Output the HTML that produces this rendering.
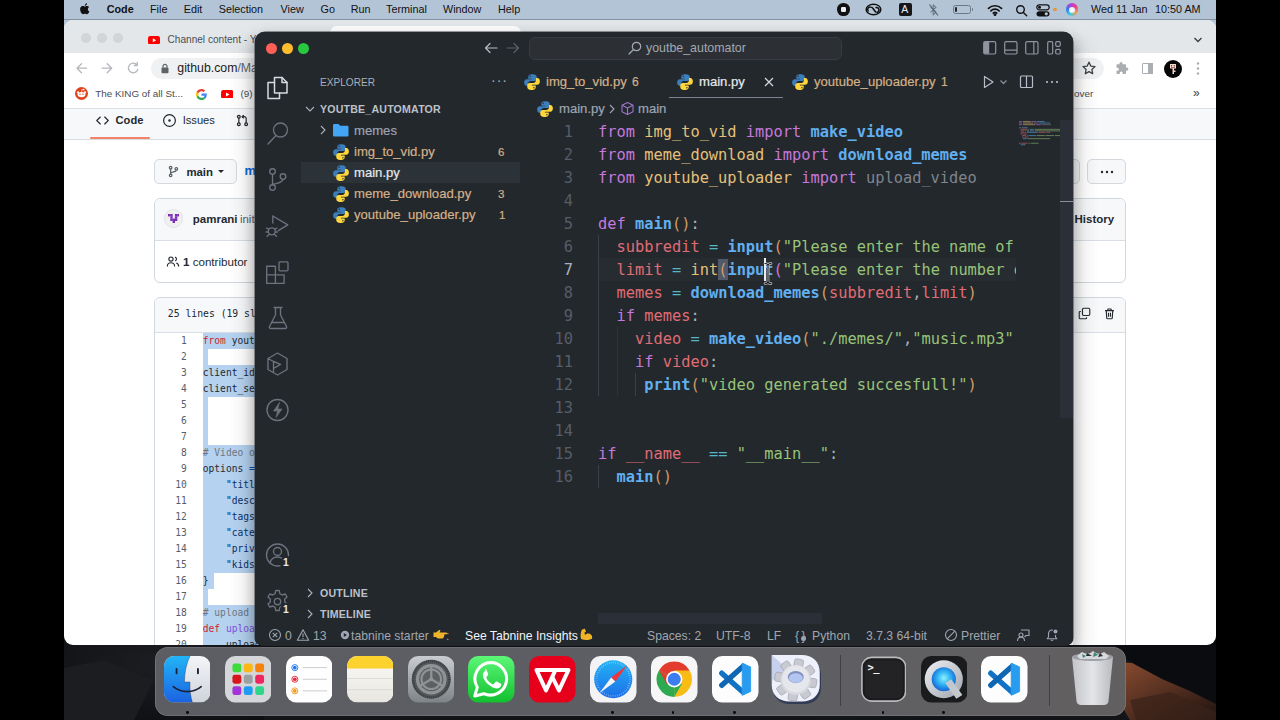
<!DOCTYPE html>
<html><head><meta charset="utf-8"><title>screen</title>
<style>
*{box-sizing:border-box;margin:0;padding:0}
html,body{width:1280px;height:720px;overflow:hidden;background:#000;font-family:"Liberation Sans",sans-serif;}
.abs,.abs *{position:absolute}
#screen{position:absolute;left:0;top:0;width:1280px;height:720px;overflow:hidden;background:#15161a}
.bar{top:0;width:64px;height:720px;background:#000}
#screen div,#screen span,#screen svg{position:absolute;white-space:nowrap}
/* menu bar */
#menubar{left:64px;top:0;width:1152px;height:30px;background:#b4c4d7}
#menubar span{top:1.600px;font-size:10.8px;color:#111;line-height:14px}
/* chrome */
#chrome{left:64px;top:20px;width:1152px;height:625px;background:#fff;border-radius:9px 9px 9px 9px;overflow:hidden}
/* vscode */
#vsc{left:255px;top:32px;width:818px;height:613px;background:#23282c;border-radius:10px 10px 7px 7px;overflow:hidden;box-shadow:0 0 0 0.5px #3a3d42,0 5px 16px rgba(0,0,0,.28)}
/* dock */
#dock{left:155px;top:647px;width:970px;height:68px;background:#5b5e66;border-radius:14px}
</style></head><body>
<div id="screen">
<!--DESKTOP-->
<svg style="left:64px;top:640px" width="1152" height="80" viewBox="64 640 1152 80">
<defs><linearGradient id="rg" x1="0" y1="0" x2="1" y2="1"><stop offset="0" stop-color="#8a4c30"/><stop offset=".45" stop-color="#5a3222"/><stop offset="1" stop-color="#1e1411"/></linearGradient>
<radialGradient id="lg" cx=".5" cy=".3" r=".8"><stop offset="0" stop-color="#1c1e22"/><stop offset="1" stop-color="#0e0f12"/></radialGradient></defs>
<rect x="64" y="640" width="1152" height="80" fill="#131418"/>
<rect x="64" y="640" width="200" height="80" fill="url(#lg)"/>
<path d="M64 668l40-8l50 20l-20 40h-70z" fill="#1b1d21"/>
<path d="M1110 640h106v66l-45-22l-46-26z" fill="#0b0c0f"/>
<path d="M1118 662l14 1l30 16l28 12l26 13v16h-86l-12-20z" fill="url(#rg)"/>
<path d="M1130 700l40-8l46 20v8h-80z" fill="#3a221a" opacity=".7"/>
</svg>
<!--DESKTOP-END-->
<!--MENUBAR-->
<div id="menubar">
<svg style="left:15.300px;top:2px" width="11.500" height="14" viewBox="0 15 170 175"><path d="M150.370 130.250c-2.450 5.660-5.350 10.870-8.710 15.660-4.580 6.530-8.330 11.050-11.220 13.560-4.480 4.120-9.280 6.230-14.420 6.350-3.690 0-8.140-1.050-13.320-3.180-5.197-2.120-9.973-3.170-14.340-3.170-4.580 0-9.492 1.050-14.746 3.170-5.262 2.130-9.501 3.240-12.742 3.350-4.929.21-9.842-1.960-14.746-6.520-3.130-2.730-7.045-7.410-11.735-14.040-5.032-7.080-9.169-15.290-12.410-24.650-3.471-10.110-5.211-19.900-5.211-29.378 0-10.857 2.346-20.221 7.045-28.068 3.693-6.303 8.606-11.275 14.755-14.925s12.793-5.510 19.948-5.629c3.915 0 9.049 1.211 15.429 3.591 6.362 2.388 10.447 3.599 12.238 3.599 1.339 0 5.877-1.416 13.570-4.239 7.275-2.618 13.415-3.702 18.445-3.275 13.630 1.100 23.870 6.473 30.680 16.153-12.190 7.386-18.220 17.731-18.100 31.002.11 10.337 3.860 18.939 11.230 25.769 3.340 3.170 7.070 5.620 11.220 7.360-.9 2.610-1.850 5.110-2.860 7.510zM119.110 7.240c0 8.102-2.960 15.667-8.860 22.669-7.120 8.324-15.732 13.134-25.071 12.375a25.222 25.222 0 0 1-.188-3.070c0-7.778 3.386-16.102 9.399-22.908 3.002-3.446 6.820-6.311 11.450-8.597 4.620-2.252 8.990-3.497 13.100-3.710.12 1.083.17 2.166.17 3.240z" fill="#111" transform="translate(0,15)"/></svg>
<span style="left:42.7px;font-weight:bold;">Code</span><span style="left:86px;">File</span><span style="left:119.69999999999999px;">Edit</span><span style="left:154.7px;">Selection</span><span style="left:216.5px;">View</span><span style="left:256.5px;">Go</span><span style="left:286.7px;">Run</span><span style="left:322px;">Terminal</span><span style="left:379px;">Window</span><span style="left:434px;">Help</span>
<div style="left:773.2px;top:3.200px;width:12.500px;height:12.500px;border-radius:6.300px;background:#111"></div><div style="left:776.7px;top:6.700px;width:5.500px;height:5.500px;border-radius:1.300px;background:#e8eef5"></div>
<svg style="left:801px;top:3px" width="17" height="13" viewBox="0 0 17 13" fill="none" stroke="#111" stroke-width="1.500"><ellipse cx="8.500" cy="6.500" rx="7.300" ry="5.300"/><path d="M3.500 8.500a2.600 2.600 0 0 1 2-4.500c1 0 2 .5 2.500 1.500l3 4M11.500 9.500a2.500 2.500 0 1 0-1-4.800"/></svg>
<div style="left:834.5px;top:3px;width:13px;height:13px;border-radius:2px;background:#15171a"></div><span style="left:837.3px;top:3px;font-size:10.500px;color:#e8eef5;line-height:13px">A</span>
<svg style="left:863px;top:3px" width="13" height="14" viewBox="0 0 13 14" fill="none" stroke="#6d7887" stroke-width="1.100" stroke-linejoin="round"><path d="M3.500 4.200l5.500 5l-2.800 2.600v-10l2.800 2.600l-5.500 5"/><path d="M2.500 1.500l8.500 11" stroke="#54606e"/></svg>
<div style="left:888.8px;top:5.300px;width:18.500px;height:8.800px;border:1px solid #6d7887;border-radius:2.500px"></div><div style="left:890.5px;top:7px;width:2.500px;height:5.400px;background:#222;border-radius:1px"></div><div style="left:908px;top:8px;width:1.300px;height:3.300px;background:#6d7887;border-radius:0 1px 1px 0"></div>
<svg style="left:922.5px;top:3.500px" width="16" height="12" viewBox="0 0 16 12" fill="none" stroke="#111" stroke-width="1.700" stroke-linecap="round"><path d="M1.500 4.300a9.500 9.500 0 0 1 13 0M3.900 6.800a6 6 0 0 1 8.200 0"/><path d="M6.300 9.200a2.500 2.500 0 0 1 3.400 0" /><circle cx="8" cy="10.600" r=".6" fill="#111"/></svg>
<svg style="left:950.5px;top:3.500px" width="13" height="13" viewBox="0 0 13 13" fill="none" stroke="#111" stroke-width="1.400" stroke-linecap="round"><circle cx="5.500" cy="5.500" r="3.800"/><path d="M8.400 8.400l3.300 3.300"/></svg>
<svg style="left:972px;top:3.500px" width="14" height="13" viewBox="0 0 14 13"><rect x=".8" y=".8" width="12.400" height="5" rx="2.500" fill="none" stroke="#111" stroke-width="1.200"/><circle cx="3.500" cy="3.300" r="1.500" fill="#111"/><rect x=".5" y="7.200" width="13" height="5.300" rx="2.650" fill="#111"/><circle cx="10.300" cy="9.850" r="1.600" fill="#b4c3d4"/></svg>
<div style="left:989.3px;top:8px;width:3.400px;height:3.400px;border-radius:2px;background:#e8943a"></div>
<div style="left:1001.5px;top:3.300px;width:12.400px;height:12.400px;border-radius:6.200px;background:conic-gradient(from 200deg,#3fd0e0,#3a7bf0,#b040e0,#f04080,#f0a050,#3fd0e0)"></div><div style="left:1004.7px;top:6.500px;width:6px;height:6px;border-radius:3px;background:radial-gradient(#fff,#d8e8ff)"></div>
<div style="left:0;top:19.200px;width:1152px;height:.9px;background:rgba(70,85,105,.45)"></div><!--MBLINE--><span style="left:1027px">Wed 11 Jan</span><span style="left:1091px">10:50 AM</span>
</div><!--MENU-END-->
<!--CHROME-->
<div id="chrome"><div id="chi" style="left:-64px;top:-20px;width:1280px;height:720px">
<!--CHROME-IN-->

<style>
#chi .g{font-size:11.2px;line-height:14px;color:#24292f}
#chi .gm{font-family:"DejaVu Sans Mono","Liberation Mono",monospace;font-size:9.6px;line-height:16px;height:16px;color:#24292f;white-space:pre!important}
#chi .gm i{position:static!important;font-style:normal}
#chi .gn{font-family:"DejaVu Sans Mono","Liberation Mono",monospace;font-size:9.6px;line-height:16px;height:16px;color:#57606a;width:30px;left:156.700px;text-align:right}
.box{border:1px solid #d0d7de;border-radius:6px;background:#fff;overflow:hidden}
</style>
<div style="left:64px;top:20px;width:1152px;height:33px;background:#e3e7ea"></div>
<div style="left:80.6px;top:32.600px;width:10px;height:10px;border-radius:5px;background:#d2d4d7"></div><div style="left:96.7px;top:32.600px;width:10px;height:10px;border-radius:5px;background:#d2d4d7"></div><div style="left:112.8px;top:32.600px;width:10px;height:10px;border-radius:5px;background:#d2d4d7"></div><div style="left:330px;top:26px;width:191px;height:27px;background:#fff;border-radius:7px 7px 0 0"></div><svg style="left:148.3px;top:35.8px" width="12" height="8.5" viewBox="0 0 12 8.500"><rect width="12" height="8.500" rx="2.200" fill="#f00"/><path d="M4.800 2.300v3.900l3.400-1.950z" fill="#fff"/></svg><span style="left:167.500px;top:33px;font-size:10.1px;line-height:14px;color:#4a4e53">Channel content - YouTube Studio</span>
<svg style="left:1191px;top:34px" width="14" height="12" viewBox="0 0 14 12" fill="none" stroke="#3c4043" stroke-width="1.400"><path d="M3.500 4l3.500 3.500l3.500-3.500"/></svg>
<div style="left:64px;top:53px;width:1152px;height:55px;background:#fff"></div>
<svg style="left:74px;top:60px" width="70" height="16" viewBox="74 60 70 16" fill="none" stroke="#b4b7bb" stroke-width="1.300" stroke-linecap="round" stroke-linejoin="round"><path d="M86.500 68.200h-9.500M81.500 63.700l-4.500 4.500l4.500 4.500"/><path d="M102.200 68.200h9.500M107.200 63.700l4.500 4.500l-4.500 4.500"/><path d="M137 65a4.800 4.800 0 1 0 .8 4.500M137.300 62.500v3h-3"/></svg>
<div style="left:151px;top:57.500px;width:953px;height:21.500px;border-radius:11px;background:#eff1f3"></div>
<svg style="left:160px;top:63px" width="10" height="11" viewBox="0 0 10 11"><rect x="1.500" y="4.500" width="7" height="5.800" rx="1" fill="#5f6368"/><path d="M3 4.800v-1.500a2 2 0 0 1 4 0v1.500" fill="none" stroke="#5f6368" stroke-width="1.200"/></svg>
<span style="left:177.300px;top:60.500px;font-size:12.3px;line-height:15px;color:#1f2023">github.com<span style="position:static!important;color:#5f6368">/MaanavD/meme</span></span>
<svg style="left:1081px;top:60px" width="16" height="16" viewBox="0 0 16 16" fill="none" stroke="#3c4043" stroke-width="1.300" stroke-linejoin="round"><path d="M8 2.200l1.800 3.900l4.200.5l-3.100 2.900l.8 4.200l-3.700-2.100l-3.700 2.100l.8-4.200l-3.100-2.900l4.200-.5z"/></svg>
<svg style="left:1114px;top:61px" width="15" height="15" viewBox="0 0 15 15"><path d="M5.500 2.500a1.500 1.500 0 0 1 3 0v.8h2.700a.8.800 0 0 1 .8.800v2.400h.8a1.600 1.600 0 0 1 0 3.200h-.8v2.500a.8.800 0 0 1-.8.800h-2.500v-.9a1.500 1.500 0 0 0-3 0v.9h-2.400a.8.800 0 0 1-.8-.8v-2.500h.8a1.500 1.500 0 0 0 0-3h-.8v-2.600a.8.800 0 0 1 .8-.8h2.200z" fill="#aaadb1"/></svg>
<div style="left:1141.500px;top:63px;width:11.500px;height:10.500px;border:1.500px solid #aaadb1;border-radius:1px"></div><div style="left:1148px;top:63px;width:5px;height:10.500px;background:#aaadb1"></div>
<div style="left:1164px;top:59.500px;width:18px;height:18px;border-radius:9px;background:#060606"></div>
<svg style="left:1168px;top:63px" width="10" height="12" viewBox="0 0 10 12"><path d="M2 1h6v4.500h-2v2h1.500v1.500h-1.500v2h-1.500v-5.500h-2.500z" fill="#f4d9c6"/><rect x="3" y="2.300" width="1" height="1" fill="#000"/><rect x="5.800" y="2.300" width="1" height="1" fill="#000"/><rect x="3" y="4" width="3.800" height=".7" fill="#b33"/></svg>
<svg style="left:1195px;top:61px" width="6" height="15" viewBox="0 0 6 15" fill="#aaadb1"><circle cx="3" cy="2.500" r="1.200"/><circle cx="3" cy="7.500" r="1.200"/><circle cx="3" cy="12.500" r="1.200"/></svg>
<div style="left:75.200px;top:87px;width:13px;height:13px;border-radius:6.500px;background:#e0421b"></div><svg style="left:75.200px;top:87px" width="13" height="13" viewBox="0 0 13 13"><ellipse cx="6.500" cy="7.600" rx="3.900" ry="2.700" fill="#fff"/><circle cx="10" cy="5.400" r="1.100" fill="#fff"/><circle cx="3" cy="5.400" r="1.100" fill="#fff"/><circle cx="8.800" cy="2.600" r=".8" fill="#fff"/><path d="M6.500 5l.6-2.600l1.700.4" stroke="#fff" stroke-width=".6" fill="none"/><circle cx="5" cy="7.200" r=".7" fill="#e0421b"/><circle cx="8" cy="7.200" r=".7" fill="#e0421b"/></svg>
<span style="left:95.200px;top:86.500px;font-size:9.9px;line-height:14px;color:#4a4d51">The KING of all St...</span>
<svg style="left:196.300px;top:88.500px" width="11" height="11" viewBox="0 0 48 48"><path fill="#EA4335" d="M24 9.500c3.500 0 6.600 1.200 9.100 3.600l6.800-6.800C35.800 2.500 30.300 0 24 0 14.600 0 6.500 5.400 2.600 13.200l7.900 6.200C12.400 13.700 17.700 9.500 24 9.500z"/><path fill="#4285F4" d="M46.980 24.550c0-1.570-.15-3.090-.38-4.550H24v9.020h12.940c-.58 2.960-2.260 5.480-4.780 7.180l7.730 6c4.510-4.180 7.090-10.360 7.090-17.650z"/><path fill="#FBBC05" d="M10.530 28.590c-.48-1.450-.76-2.990-.76-4.590s.27-3.140.76-4.590l-7.980-6.190C.92 16.460 0 20.120 0 24c0 3.880.92 7.540 2.560 10.780l7.970-6.190z"/><path fill="#34A853" d="M24 48c6.480 0 11.930-2.130 15.890-5.810l-7.730-6c-2.150 1.450-4.920 2.300-8.160 2.300-6.260 0-11.570-4.220-13.470-9.910l-7.980 6.190C6.510 42.620 14.620 48 24 48z"/></svg>
<svg style="left:220.8px;top:89.6px" width="12.5" height="8.8" viewBox="0 0 12 8.500"><rect width="12" height="8.500" rx="2.200" fill="#f00"/><path d="M4.800 2.300v3.900l3.400-1.950z" fill="#fff"/></svg><span style="left:240.500px;top:86.500px;font-size:9.9px;line-height:14px;color:#4a4d51">(9) YouTube</span>
<span style="left:1074px;top:86.500px;font-size:9.9px;line-height:14px;color:#4a4d51">over</span>
<span style="left:1193px;top:85.500px;font-size:12px;line-height:14px;color:#3c4043">»</span>
<div style="left:64px;top:108px;width:1152px;height:1px;background:#dcdfe3"></div>
<div style="left:64px;top:109px;width:1152px;height:30px;background:#f6f8fa"></div>
<div style="left:64px;top:139px;width:1152px;height:1px;background:#d8dee4"></div>
<div style="left:90px;top:137.300px;width:59.500px;height:2px;background:#f0826a;border-radius:1px"></div>
<svg style="left:96px;top:114px" width="13" height="13" viewBox="0 0 16 16" fill="#24292f"><path d="M4.720 3.220a.75.750 0 0 1 1.060 1.060L2.060 8l3.720 3.720a.75.750 0 1 1-1.060 1.060L.47 8.530a.75.750 0 0 1 0-1.060zm6.560 0a.75.750 0 1 0-1.060 1.060L13.940 8l-3.720 3.720a.75.750 0 1 0 1.060 1.060l4.250-4.250a.75.750 0 0 0 0-1.060z"/></svg>
<span class="g" style="left:115.600px;top:113px;font-weight:bold;font-size:11.1px">Code</span>
<svg style="left:162.700px;top:113.500px" width="13" height="13" viewBox="0 0 16 16" fill="#24292f"><circle cx="8" cy="8" r="1.500"/><path d="M8 0a8 8 0 1 1 0 16A8 8 0 0 1 8 0zM1.500 8a6.500 6.500 0 1 0 13 0a6.500 6.500 0 0 0-13 0z"/></svg>
<span class="g" style="left:182.700px;top:113px;font-size:11.15px">Issues</span>
<svg style="left:236px;top:114px" width="13" height="13" viewBox="0 0 16 16" fill="none" stroke="#24292f" stroke-width="1.500"><circle cx="3.500" cy="3.300" r="1.700"/><circle cx="3.500" cy="12.700" r="1.700"/><circle cx="12.500" cy="12.700" r="1.700"/><path d="M3.500 5v6M12.500 11v-5.500c0-1.500-1-2.200-2.500-2.200h-2M9.500 1.300l-2 2l2 2"/></svg>
<div style="left:154px;top:158.500px;width:83px;height:25.500px;border:1px solid #d5d9dd;border-radius:5px;background:#f6f8fa"></div>
<svg style="left:167px;top:165px" width="13" height="13" viewBox="0 0 16 16" fill="none" stroke="#57606a" stroke-width="1.500"><circle cx="4.500" cy="3.300" r="1.600"/><circle cx="4.500" cy="12.700" r="1.600"/><circle cx="11.500" cy="4.800" r="1.600"/><path d="M4.500 5v6M11.500 6.400c0 2.600-7 1.600-7 4"/></svg>
<span class="g" style="left:186.400px;top:164.500px;font-weight:bold;font-size:11.4px">main</span>
<div style="left:218px;top:170px;width:0;height:0;border-left:3.200px solid transparent;border-right:3.200px solid transparent;border-top:3.500px solid #24292f"></div>
<span class="g" style="left:244.500px;top:163.500px;font-weight:bold;font-size:12.8px;color:#0969da">memeAutomator</span>
<div style="left:1040px;top:158.500px;width:40px;height:25.500px;border:1px solid #d5d9dd;border-radius:5px;background:#f6f8fa"></div>
<div style="left:1087px;top:158.500px;width:39px;height:25.500px;border:1px solid #d5d9dd;border-radius:5px;background:#f6f8fa"></div>
<svg style="left:1098px;top:168.500px" width="18" height="6" viewBox="0 0 18 6" fill="#24292f"><circle cx="4" cy="3" r="1.200"/><circle cx="9" cy="3" r="1.200"/><circle cx="14" cy="3" r="1.200"/></svg>
<div class="box" style="left:154px;top:197.500px;width:972px;height:85.500px"></div>
<div style="left:155px;top:198.500px;width:970px;height:41.500px;background:#f6f8fa;border-radius:5px 5px 0 0"></div>
<div style="left:155px;top:240px;width:970px;height:1px;background:#d8dee4"></div>
<div style="left:163.500px;top:208.500px;width:19.500px;height:19.500px;border-radius:10px;background:#f0f0f0;border:1px solid #e3e3e3"></div>
<svg style="left:167.500px;top:213.500px" width="11.500" height="9.200" viewBox="0 0 11.500 9.200" fill="#7a2db8"><rect x="0.0" y="0.0" width="2.4" height="2.4"/><rect x="2.3" y="0.0" width="2.4" height="2.4"/><rect x="6.9" y="0.0" width="2.4" height="2.4"/><rect x="9.2" y="0.0" width="2.4" height="2.4"/><rect x="2.3" y="2.3" width="2.4" height="2.4"/><rect x="6.9" y="2.3" width="2.4" height="2.4"/><rect x="2.3" y="4.6" width="2.4" height="2.4"/><rect x="4.6" y="4.6" width="2.4" height="2.4"/><rect x="6.9" y="4.6" width="2.4" height="2.4"/><rect x="4.6" y="6.9" width="2.4" height="2.4"/></svg>
<span class="g" style="left:192.800px;top:212px;font-weight:bold;font-size:11.5px">pamrani</span>
<span class="g" style="left:240px;top:212px;color:#57606a;font-size:11.4px">initial commit</span>
<span class="g" style="left:1074.500px;top:212px;font-weight:bold;font-size:11.5px">History</span>
<svg style="left:166px;top:255px" width="14" height="13" viewBox="0 0 16 16" fill="none" stroke="#24292f" stroke-width="1.400"><circle cx="5.500" cy="5" r="2.600"/><path d="M1 14c0-3 2-4.500 4.500-4.500s4.500 1.500 4.500 4.500M10.500 2.600a2.500 2.500 0 0 1 0 4.800M12 9.800c1.800.5 3 1.800 3 4.200"/></svg>
<span class="g" style="left:183px;top:254.500px;font-size:11.600px"><span style="position:static!important;font-weight:bold">1</span> contributor</span>
<div class="box" style="left:154px;top:296.500px;width:972px;height:360px"></div>
<div style="left:155px;top:297.500px;width:970px;height:34px;background:#f6f8fa;border-radius:5px 5px 0 0"></div>
<div style="left:155px;top:331.500px;width:970px;height:1px;background:#d8dee4"></div>
<span class="gm" style="left:167.800px;top:306px;font-size:9.75px">25 lines (19 sloc)</span>
<svg style="left:1078px;top:307px" width="13" height="13" viewBox="0 0 16 16" fill="none" stroke="#24292f" stroke-width="1.400" stroke-linejoin="round"><rect x="5.500" y="1.500" width="9" height="9" rx="1.500"/><path d="M3.500 5.500h-1a1 1 0 0 0-1 1v7a1 1 0 0 0 1 1h7a1 1 0 0 0 1-1v-1"/></svg>
<svg style="left:1102.500px;top:306.500px" width="13" height="13" viewBox="0 0 16 16" fill="none" stroke="#24292f" stroke-width="1.400" stroke-linejoin="round"><path d="M2.500 4.500h11M6 4.500v-2h4v2M4 4.500l.6 9.200a1 1 0 0 0 1 .8h4.800a1 1 0 0 0 1-.8l.6-9.200M6.800 7v5M9.200 7v5"/></svg>
<div style="left:202.500px;top:333.1px;width:60px;height:16.200px;background:#b5d2f0"></div><span class="gn" style="top:333.1px">1</span><span class="gm" style="left:202.800px;top:333.1px"><i style="color:#cf222e">from</i> youtube_upload</span>
<div style="left:202.500px;top:349.1px;width:5.8px;height:16.200px;background:#b5d2f0"></div><span class="gn" style="top:349.1px">2</span>
<div style="left:202.500px;top:365.1px;width:60px;height:16.200px;background:#b5d2f0"></div><span class="gn" style="top:365.1px">3</span><span class="gm" style="left:202.800px;top:365.1px">client_id = </span>
<div style="left:202.500px;top:381.1px;width:60px;height:16.200px;background:#b5d2f0"></div><span class="gn" style="top:381.1px">4</span><span class="gm" style="left:202.800px;top:381.1px">client_secret</span>
<div style="left:202.500px;top:397.1px;width:5.8px;height:16.200px;background:#b5d2f0"></div><span class="gn" style="top:397.1px">5</span>
<div style="left:202.500px;top:413.1px;width:5.8px;height:16.200px;background:#b5d2f0"></div><span class="gn" style="top:413.1px">6</span>
<div style="left:202.500px;top:429.1px;width:5.8px;height:16.200px;background:#b5d2f0"></div><span class="gn" style="top:429.1px">7</span>
<div style="left:202.500px;top:445.1px;width:60px;height:16.200px;background:#b5d2f0"></div><span class="gn" style="top:445.1px">8</span><span class="gm" style="left:202.800px;top:445.1px"><i style="color:#6e7781"># Video options</i></span>
<div style="left:202.500px;top:461.1px;width:60px;height:16.200px;background:#b5d2f0"></div><span class="gn" style="top:461.1px">9</span><span class="gm" style="left:202.800px;top:461.1px">options <i style="color:#0550ae">=</i> {</span>
<div style="left:202.500px;top:477.1px;width:60px;height:16.200px;background:#b5d2f0"></div><span class="gn" style="top:477.1px">10</span><span class="gm" style="left:202.800px;top:477.1px">    <i style="color:#0a3069">"title" :</i></span>
<div style="left:202.500px;top:493.1px;width:60px;height:16.200px;background:#b5d2f0"></div><span class="gn" style="top:493.1px">11</span><span class="gm" style="left:202.800px;top:493.1px">    <i style="color:#0a3069">"description"</i></span>
<div style="left:202.500px;top:509.1px;width:60px;height:16.200px;background:#b5d2f0"></div><span class="gn" style="top:509.1px">12</span><span class="gm" style="left:202.800px;top:509.1px">    <i style="color:#0a3069">"tags" : [</i></span>
<div style="left:202.500px;top:525.1px;width:60px;height:16.200px;background:#b5d2f0"></div><span class="gn" style="top:525.1px">13</span><span class="gm" style="left:202.800px;top:525.1px">    <i style="color:#0a3069">"categoryId"</i></span>
<div style="left:202.500px;top:541.1px;width:60px;height:16.200px;background:#b5d2f0"></div><span class="gn" style="top:541.1px">14</span><span class="gm" style="left:202.800px;top:541.1px">    <i style="color:#0a3069">"privacyStatus"</i></span>
<div style="left:202.500px;top:557.1px;width:60px;height:16.200px;background:#b5d2f0"></div><span class="gn" style="top:557.1px">15</span><span class="gm" style="left:202.800px;top:557.1px">    <i style="color:#0a3069">"kidsContent"</i></span>
<div style="left:202.500px;top:573.1px;width:11.6px;height:16.200px;background:#b5d2f0"></div><span class="gn" style="top:573.1px">16</span><span class="gm" style="left:202.800px;top:573.1px">}</span>
<div style="left:202.500px;top:589.1px;width:5.8px;height:16.200px;background:#b5d2f0"></div><span class="gn" style="top:589.1px">17</span>
<div style="left:202.500px;top:605.1px;width:60px;height:16.200px;background:#b5d2f0"></div><span class="gn" style="top:605.1px">18</span><span class="gm" style="left:202.800px;top:605.1px"><i style="color:#6e7781"># upload video</i></span>
<div style="left:202.500px;top:621.1px;width:60px;height:16.200px;background:#b5d2f0"></div><span class="gn" style="top:621.1px">19</span><span class="gm" style="left:202.800px;top:621.1px"><i style="color:#cf222e">def</i> <i style="color:#8250df">upload</i></span>
<div style="left:202.500px;top:637.1px;width:60px;height:16.200px;background:#b5d2f0"></div><span class="gn" style="top:637.1px">20</span><span class="gm" style="left:202.800px;top:637.1px">    upload</span>
<div style="left:1073px;top:30px;width:26px;height:615px;-webkit-mask-image:linear-gradient(180deg,transparent,#000 24px);mask-image:linear-gradient(180deg,transparent,#000 24px);background:linear-gradient(90deg,rgba(0,0,0,.11),rgba(0,0,0,.04) 40%,rgba(0,0,0,0))"></div>
<div style="left:229px;top:30px;width:26px;height:615px;-webkit-mask-image:linear-gradient(180deg,transparent,#000 24px);mask-image:linear-gradient(180deg,transparent,#000 24px);background:linear-gradient(270deg,rgba(0,0,0,.11),rgba(0,0,0,.04) 40%,rgba(0,0,0,0))"></div>

<!--CHROME-END-->
</div></div>
<!--VSCODE-->
<div id="vsc"><div id="vsi" style="left:-255px;top:-32px;width:1280px;height:720px">
<!--VSC-IN-->
<style>
#vsi .t{font-size:12.2px;color:#9da5b4;line-height:16px}
#vsi .ed{left:520px;top:64px;width:553px;height:560px;background:#23282c}
.code{font-family:"DejaVu Sans Mono","Liberation Mono",monospace;font-size:15.35px;line-height:23px;height:23px;white-space:pre!important;color:#abb2bf}
.code b{position:static!important;font-weight:bold;color:#61afef}
.code i{position:static!important;font-style:normal}
.ln{font-family:"DejaVu Sans Mono","Liberation Mono",monospace;font-size:15.35px;line-height:23px;height:23px;color:#565d68;width:40px;left:533px;text-align:right}
.k{color:#c678dd}.m{color:#e5c07b}.v{color:#e06c75}.o{color:#56b6c2}.s{color:#98c379}.p1{color:#d19a66}.p2{color:#c678dd}.g{color:#7f848e}
.ig{width:1px;background:#3b4048}
.row{left:301px;width:219px;height:21px}
.fn{font-size:13.1px;line-height:16px;color:#d3b089;-webkit-text-stroke:.2px}
.sec{font-size:10.6px;font-weight:bold;color:#bcc1c9;line-height:14px;letter-spacing:.2px}
.sb{font-size:12.2px;line-height:16px;color:#a0a6af;top:627.700px}
</style>
<!-- title bar -->
<div style="left:255px;top:32px;width:818px;height:32px;background:#23282c"></div>
<div style="left:265.700px;top:43.200px;width:11px;height:11px;border-radius:6px;background:#fe5f57"></div>
<div style="left:281.500px;top:43.200px;width:11px;height:11px;border-radius:6px;background:#febc2e"></div>
<div style="left:297.500px;top:43.200px;width:11px;height:11px;border-radius:6px;background:#28c840"></div>
<svg style="left:483px;top:41px" width="38" height="14" viewBox="0 0 38 14" fill="none" stroke-width="1.2" stroke-linecap="round" stroke-linejoin="round"><path d="M14 7H2.5M7 2.5L2.5 7L7 11.5" stroke="#b8bec9"/><path d="M24 7H35.5M31 2.5L35.5 7L31 11.5" stroke="#5a606b"/></svg>
<div style="left:529px;top:36.500px;width:313px;height:23px;border-radius:6px;background:#2c3035;border:1px solid #383c42"></div>
<svg style="left:627px;top:40px" width="16" height="16" viewBox="0 0 16 16" fill="none" stroke="#a3a8b0" stroke-width="1.2"><circle cx="9.5" cy="6.5" r="4.2"/><path d="M6.5 9.5L2 14" stroke-linecap="round"/></svg>
<span class="t" style="left:646px;top:40px;color:#a3a8b0;font-size:12.4px">youtbe_automator</span>
<!-- layout icons -->
<svg style="left:980px;top:38px" width="86" height="20" viewBox="980 38 86 20" fill="none" stroke="#8f959f" stroke-width="1.2"><rect x="983.700" y="41.700" width="12" height="12.300" rx="1.500"/><path d="M984 42h5.200v11.700h-5.200z" fill="#8f959f" stroke="none"/><rect x="1004.700" y="41.700" width="12.300" height="12.300" rx="1.500"/><path d="M1004.700 50.200h12.300"/><rect x="1025.700" y="41.700" width="12.300" height="12.300" rx="1.500"/><path d="M1033.800 41.700v12.300"/><rect x="1047.700" y="41.700" width="5" height="12.300" rx="1.200"/><rect x="1055.700" y="41.700" width="4.600" height="4.600" rx="1.200"/><rect x="1055.700" y="49.400" width="4.600" height="4.600" rx="1.200"/></svg>
<!-- activity bar -->
<div style="left:255px;top:64px;width:46px;height:560px;background:#23282c"></div>

<svg style="left:255px;top:64px" width="46" height="560" viewBox="255 64 46 560" fill="none" stroke="#6c727e" stroke-width="1.35" stroke-linejoin="round" stroke-linecap="round">
<g stroke="#d7dae0" stroke-width="1.5"><path d="M274.500 77.500h7.500l5 5v10.500h-12.500z"/><path d="M282 77.500v5h5"/><path d="M274.500 82.500h-6.500v16h11.500v-5.500"/></g>
<circle cx="280.500" cy="130" r="7"/><path d="M276 135.500l-8 8.500"/>
<circle cx="272.500" cy="171.500" r="2.800"/><circle cx="272.500" cy="187.500" r="2.800"/><circle cx="283" cy="176.500" r="2.800"/><path d="M272.500 174.300v10.400M283 179.300c0 3.500-6 4-10.500 5.200"/>
<g transform="translate(.8 1.500)"><path d="M272 214.500l15 8.800l-9.500 5.800M272 214.500v7"/><circle cx="271" cy="229.800" r="3.500"/><path d="M265.800 226.500l2 1.200M276.200 226.500l-2 1.200M265.300 230.500h2.200M276.700 230.500h-2.200M266.300 234.800l2-1.700M275.700 234.800l-2-1.700"/></g>
<path d="M266.700 266.200h8.700v8.600h-8.700zM266.700 274.800h8.700v8.600h-8.700zM275.400 274.800h8.700v8.600h-8.700z"/><rect x="279" y="261.800" width="9" height="9" rx="1"/>
<path d="M274 307.500h8M275.500 307.500v7.500l-6 11.500c-.5 1 .2 2 1.200 2h14.600c1 0 1.700-1 1.200-2l-6-11.500v-7.500M271.500 322.500h13"/>
<path d="M277.500 353l9.500 5.500v11l-9.500 5.500l-9.500-5.500v-11zM268 358.500l5.500 3v10.500M273.500 361.500v7l7-4.200z"/>
<circle cx="277.500" cy="410" r="10.500"/><path d="M279.500 402.500l-6 8.500h4l-1.500 6.500l6-8.500h-4z" fill="#6c727e" stroke-width=".6"/>
<circle cx="277.500" cy="555" r="11"/><circle cx="277.500" cy="551.500" r="4"/><path d="M270 563c1-4 4-6 7.500-6s6.500 2 7.500 6"/>
<g transform="translate(0 1.500)"><circle cx="277.500" cy="600" r="3.200"/><path d="M275.800 589h3.400l.7 3.100l2.400 1.400l3-1l1.700 3l-2.300 2.100v2.800l2.300 2.100l-1.700 3l-3-1l-2.400 1.400l-.7 3.100h-3.400l-.7-3.100l-2.400-1.400l-3 1l-1.700-3l2.300-2.100v-2.800l-2.300-2.100l1.700-3l3 1l2.400-1.400z"/></g>
</svg>
<div style="left:280px;top:556px;width:14px;height:14px;border-radius:7px;background:#23282c"></div>
<span style="left:283px;top:557px;font-size:10.3px;font-weight:bold;color:#e8eaee;line-height:12px">1</span>
<div style="left:280px;top:603px;width:14px;height:14px;border-radius:7px;background:#23282c"></div>
<span style="left:283px;top:604px;font-size:10.3px;font-weight:bold;color:#e8eaee;line-height:12px">1</span>

<!-- sidebar -->
<div style="left:301px;top:64px;width:219px;height:560px;background:#23282c"></div>
<span style="left:320px;top:75.700px;font-size:10.1px;color:#a9afba;line-height:14px">EXPLORER</span>
<span style="left:491px;top:72px;font-size:14px;color:#a9afba;line-height:16px;letter-spacing:1px">···</span>
<svg style="left:304px;top:103px" width="12" height="12" viewBox="0 0 12 12" fill="none" stroke="#a9afba" stroke-width="1.1"><path d="M2 4l4 4l4-4"/></svg>
<span class="sec" style="left:320px;top:102px">YOUTBE_AUTOMATOR</span>
<div class="row" style="top:162px;background:#2c3338"></div>
<svg style="left:317px;top:124px" width="12" height="12" viewBox="0 0 12 12" fill="none" stroke="#a9afba" stroke-width="1.1"><path d="M4 2l4 4l-4 4"/></svg>
<svg style="left:332px;top:123px" width="17" height="14" viewBox="0 0 17 14"><path d="M1 2.2a1.2 1.2 0 0 1 1.2-1.2h4.3l1.6 1.8h7.200a1.200 1.200 0 0 1 1.200 1.200v8.300a1.200 1.200 0 0 1-1.200 1.200h-13.100a1.200 1.200 0 0 1-1.200-1.200z" fill="#42a5f5"/></svg>
<span class="fn" style="left:354px;top:122.600px;color:#9da5b4">memes</span>
<span class="fn" style="left:354px;top:143.800px">img_to_vid.py</span><span class="fn" style="left:498px;top:143.800px;font-size:11.5px">6</span>
<span class="fn" style="left:354px;top:165px;color:#e6e9ee">main.py</span>
<span class="fn" style="left:354px;top:185.800px">meme_download.py</span><span class="fn" style="left:498px;top:185.800px;font-size:11.5px">3</span>
<span class="fn" style="left:354px;top:206.800px">youtube_uploader.py</span><span class="fn" style="left:499px;top:206.800px;font-size:11.5px">1</span>
<svg style="left:332px;top:142.5px" width="18" height="18" viewBox="0 0 16 16"><path d="M7.900 1C5.400 1 4.700 2.100 4.700 3.300V5h3.400v.6H3.300C1.900 5.600 1 6.800 1 8.500s.9 3 2.300 3h1.200V9.600c0-1.300 1.100-2.400 2.400-2.400h3.300c1.100 0 2-.9 2-2V3.300C12.200 2 11 1 8.900 1z" fill="#3c7ebb"/><path d="M7.900 1C5.400 1 4.700 2.100 4.700 3.300V5h3.400v.6H3.300C1.900 5.600 1 6.800 1 8.500s.9 3 2.300 3h1.200V9.600c0-1.300 1.100-2.400 2.400-2.400h3.300c1.100 0 2-.9 2-2V3.300C12.200 2 11 1 8.900 1z" fill="#fdd73b" transform="rotate(180 8 8)"/><circle cx="6.300" cy="2.900" r=".65" fill="#23282c"/><circle cx="9.700" cy="13.100" r=".65" fill="#23282c"/></svg><svg style="left:332px;top:163.5px" width="18" height="18" viewBox="0 0 16 16"><path d="M7.900 1C5.400 1 4.700 2.100 4.700 3.300V5h3.400v.6H3.300C1.900 5.600 1 6.800 1 8.500s.9 3 2.300 3h1.200V9.600c0-1.300 1.100-2.400 2.400-2.400h3.300c1.100 0 2-.9 2-2V3.300C12.200 2 11 1 8.900 1z" fill="#3c7ebb"/><path d="M7.900 1C5.400 1 4.700 2.100 4.700 3.300V5h3.400v.6H3.300C1.900 5.600 1 6.800 1 8.500s.9 3 2.300 3h1.200V9.600c0-1.300 1.100-2.400 2.400-2.400h3.300c1.100 0 2-.9 2-2V3.300C12.200 2 11 1 8.900 1z" fill="#fdd73b" transform="rotate(180 8 8)"/><circle cx="6.300" cy="2.900" r=".65" fill="#23282c"/><circle cx="9.700" cy="13.100" r=".65" fill="#23282c"/></svg><svg style="left:332px;top:184.5px" width="18" height="18" viewBox="0 0 16 16"><path d="M7.900 1C5.400 1 4.700 2.100 4.700 3.300V5h3.400v.6H3.300C1.900 5.600 1 6.800 1 8.500s.9 3 2.300 3h1.200V9.600c0-1.300 1.100-2.400 2.400-2.400h3.300c1.100 0 2-.9 2-2V3.300C12.200 2 11 1 8.900 1z" fill="#3c7ebb"/><path d="M7.900 1C5.400 1 4.700 2.100 4.700 3.300V5h3.400v.6H3.300C1.900 5.600 1 6.800 1 8.500s.9 3 2.300 3h1.200V9.600c0-1.300 1.100-2.400 2.400-2.400h3.300c1.100 0 2-.9 2-2V3.300C12.200 2 11 1 8.900 1z" fill="#fdd73b" transform="rotate(180 8 8)"/><circle cx="6.300" cy="2.900" r=".65" fill="#23282c"/><circle cx="9.700" cy="13.100" r=".65" fill="#23282c"/></svg><svg style="left:332px;top:205.5px" width="18" height="18" viewBox="0 0 16 16"><path d="M7.900 1C5.400 1 4.700 2.100 4.700 3.300V5h3.400v.6H3.300C1.900 5.600 1 6.800 1 8.500s.9 3 2.300 3h1.200V9.600c0-1.300 1.100-2.400 2.400-2.400h3.300c1.100 0 2-.9 2-2V3.300C12.200 2 11 1 8.900 1z" fill="#3c7ebb"/><path d="M7.900 1C5.400 1 4.700 2.100 4.700 3.300V5h3.400v.6H3.300C1.900 5.600 1 6.800 1 8.500s.9 3 2.300 3h1.200V9.600c0-1.300 1.100-2.400 2.400-2.400h3.300c1.100 0 2-.9 2-2V3.300C12.200 2 11 1 8.900 1z" fill="#fdd73b" transform="rotate(180 8 8)"/><circle cx="6.300" cy="2.900" r=".65" fill="#23282c"/><circle cx="9.700" cy="13.100" r=".65" fill="#23282c"/></svg>
<svg style="left:304px;top:587px" width="12" height="12" viewBox="0 0 12 12" fill="none" stroke="#a9afba" stroke-width="1.1"><path d="M4 2l4 4l-4 4"/></svg>
<span class="sec" style="left:320px;top:586px">OUTLINE</span>
<svg style="left:304px;top:608px" width="12" height="12" viewBox="0 0 12 12" fill="none" stroke="#a9afba" stroke-width="1.1"><path d="M4 2l4 4l-4 4"/></svg>
<span class="sec" style="left:320px;top:607px">TIMELINE</span>
<!-- editor -->
<div class="ed"></div>
<!-- tabs -->
<div style="left:520px;top:64px;width:553px;height:35px;background:#23282c"></div>
<div style="left:659px;top:64px;width:127px;height:35px;background:#23282c"></div>
<div style="left:669px;top:97.400px;width:114px;height:1px;background:#7d838d"></div>
<span class="fn" style="left:546px;top:74px">img_to_vid.py</span><span class="fn" style="left:632px;top:74px;font-size:12px">6</span>
<span class="fn" style="left:699px;top:74px;color:#e6e9ee">main.py</span>
<svg style="left:763px;top:76px" width="12" height="12" viewBox="0 0 12 12" fill="none" stroke="#d5d9e0" stroke-width="1.2"><path d="M2 2l8 8M10 2l-8 8"/></svg>
<span class="fn" style="left:814px;top:74px">youtube_uploader.py</span><span class="fn" style="left:941px;top:74px;font-size:12px">1</span>
<svg style="left:980px;top:73px" width="86" height="18" viewBox="0 0 86 18" fill="none" stroke="#b8bec9" stroke-width="1.2" stroke-linejoin="round"><path d="M4.500 3.500v11l8.500-5.500z"/><path d="M20.500 7.500l3 3l3-3" stroke="#8a909b"/><rect x="40.500" y="3" width="12" height="11.500" rx="1"/><path d="M46.500 3v11.500"/><g fill="#b8bec9" stroke="none"><circle cx="67" cy="9" r="1.100"/><circle cx="72" cy="9" r="1.100"/><circle cx="77" cy="9" r="1.100"/></g></svg>
<!-- breadcrumbs -->
<span class="fn" style="left:559px;top:101px;color:#9da5b4">main.py</span>
<svg style="left:606px;top:103px" width="12" height="12" viewBox="0 0 12 12" fill="none" stroke="#9da5b4" stroke-width="1.1"><path d="M4 2l4 4l-4 4"/></svg>
<svg style="left:620px;top:101px" width="15" height="15" viewBox="0 0 15 15" fill="none" stroke="#9d74c9" stroke-width="1.100" stroke-linejoin="round"><path d="M7.500 1.500l5.500 2.700v6.600l-5.500 2.700l-5.500-2.700v-6.600z"/><path d="M2 4.200l5.500 2.700l5.500-2.700M7.500 6.900v6.600"/></svg>
<span class="fn" style="left:638px;top:101px;color:#9da5b4">main</span>
<svg style="left:523px;top:73px" width="18" height="18" viewBox="0 0 16 16"><path d="M7.900 1C5.400 1 4.700 2.100 4.700 3.300V5h3.400v.6H3.300C1.900 5.600 1 6.800 1 8.500s.9 3 2.300 3h1.200V9.600c0-1.300 1.100-2.400 2.400-2.400h3.300c1.100 0 2-.9 2-2V3.300C12.200 2 11 1 8.900 1z" fill="#3c7ebb"/><path d="M7.900 1C5.400 1 4.700 2.100 4.700 3.300V5h3.400v.6H3.300C1.900 5.600 1 6.800 1 8.500s.9 3 2.300 3h1.200V9.600c0-1.300 1.100-2.400 2.400-2.400h3.300c1.100 0 2-.9 2-2V3.300C12.200 2 11 1 8.900 1z" fill="#fdd73b" transform="rotate(180 8 8)"/><circle cx="6.300" cy="2.900" r=".65" fill="#23282c"/><circle cx="9.700" cy="13.100" r=".65" fill="#23282c"/></svg><svg style="left:676px;top:73px" width="18" height="18" viewBox="0 0 16 16"><path d="M7.900 1C5.400 1 4.700 2.100 4.700 3.300V5h3.400v.6H3.300C1.900 5.600 1 6.800 1 8.500s.9 3 2.300 3h1.200V9.600c0-1.300 1.100-2.400 2.400-2.400h3.300c1.100 0 2-.9 2-2V3.300C12.200 2 11 1 8.900 1z" fill="#3c7ebb"/><path d="M7.900 1C5.400 1 4.700 2.100 4.700 3.300V5h3.400v.6H3.300C1.900 5.600 1 6.800 1 8.500s.9 3 2.300 3h1.200V9.600c0-1.300 1.100-2.400 2.400-2.400h3.300c1.100 0 2-.9 2-2V3.300C12.200 2 11 1 8.900 1z" fill="#fdd73b" transform="rotate(180 8 8)"/><circle cx="6.300" cy="2.900" r=".65" fill="#23282c"/><circle cx="9.700" cy="13.100" r=".65" fill="#23282c"/></svg><svg style="left:791px;top:73px" width="18" height="18" viewBox="0 0 16 16"><path d="M7.900 1C5.400 1 4.700 2.100 4.700 3.300V5h3.400v.6H3.300C1.900 5.600 1 6.800 1 8.500s.9 3 2.300 3h1.200V9.600c0-1.300 1.100-2.400 2.400-2.400h3.300c1.100 0 2-.9 2-2V3.300C12.200 2 11 1 8.900 1z" fill="#3c7ebb"/><path d="M7.900 1C5.400 1 4.700 2.100 4.700 3.300V5h3.400v.6H3.300C1.900 5.600 1 6.800 1 8.500s.9 3 2.300 3h1.200V9.600c0-1.300 1.100-2.400 2.400-2.400h3.300c1.100 0 2-.9 2-2V3.300C12.200 2 11 1 8.900 1z" fill="#fdd73b" transform="rotate(180 8 8)"/><circle cx="6.300" cy="2.900" r=".65" fill="#23282c"/><circle cx="9.700" cy="13.100" r=".65" fill="#23282c"/></svg><svg style="left:536px;top:100px" width="18" height="18" viewBox="0 0 16 16"><path d="M7.900 1C5.400 1 4.700 2.100 4.700 3.300V5h3.400v.6H3.300C1.900 5.600 1 6.800 1 8.500s.9 3 2.300 3h1.200V9.600c0-1.300 1.100-2.400 2.400-2.400h3.300c1.100 0 2-.9 2-2V3.300C12.200 2 11 1 8.900 1z" fill="#3c7ebb"/><path d="M7.900 1C5.400 1 4.700 2.100 4.700 3.300V5h3.400v.6H3.300C1.900 5.600 1 6.800 1 8.500s.9 3 2.300 3h1.200V9.600c0-1.300 1.100-2.400 2.400-2.400h3.300c1.100 0 2-.9 2-2V3.300C12.200 2 11 1 8.900 1z" fill="#fdd73b" transform="rotate(180 8 8)"/><circle cx="6.300" cy="2.900" r=".65" fill="#23282c"/><circle cx="9.700" cy="13.100" r=".65" fill="#23282c"/></svg>
<div style="left:520px;top:120px;width:496px;height:504px;overflow:hidden"><div style="left:-520px;top:-120px;width:1280px;height:720px">
<div style="left:598px;top:258.25px;width:420px;height:23px;background:#272c31"></div>
<div style="left:718px;top:259.25px;width:9.500px;height:21px;background:#515a6b"></div>
<div class="ig" style="left:598px;top:235.25px;height:161px"></div><div class="ig" style="left:617px;top:327.25px;height:69px;opacity:.45"></div><div class="ig" style="left:598px;top:465.25px;height:23px"></div><div class="ig" style="left:635px;top:373.25px;height:23px"></div>
<span class="ln" style="top:121.05px">1</span><span class="code" style="left:598px;top:121.05px"><i class="k">from</i> <i class="m">img_to_vid</i> <i class="k">import</i> <b>make_video</b></span>
<span class="ln" style="top:144.05px">2</span><span class="code" style="left:598px;top:144.05px"><i class="k">from</i> <i class="m">meme_download</i> <i class="k">import</i> <b>download_memes</b></span>
<span class="ln" style="top:167.05px">3</span><span class="code" style="left:598px;top:167.05px"><i class="k">from</i> <i class="m">youtube_uploader</i> <i class="k">import</i> <i class="g">upload_video</i></span>
<span class="ln" style="top:190.05px">4</span>
<span class="ln" style="top:213.05px">5</span><span class="code" style="left:598px;top:213.05px"><i class="k">def</i> <b>main</b><i class="p1">()</i>:</span>
<span class="ln" style="top:236.05px">6</span><span class="code" style="left:598px;top:236.05px">  <i class="v">subbredit</i> <i class="o">=</i> <b>input</b><i class="p1">(</i><i class="s">"Please enter the name of the</i></span>
<span class="ln" style="top:259.05px;color:#abb2bf">7</span><span class="code" style="left:598px;top:259.05px">  <i class="v">limit</i> <i class="o">=</i> <i class="m">int</i><i class="p1">(</i><b>input</b><i class="p2">(</i><i class="s">"Please enter the number of</i></span>
<span class="ln" style="top:282.05px">8</span><span class="code" style="left:598px;top:282.05px">  <i class="v">memes</i> <i class="o">=</i> <b>download_memes</b><i class="p1">(</i><i class="v">subbredit</i>,<i class="v">limit</i><i class="p1">)</i></span>
<span class="ln" style="top:305.05px">9</span><span class="code" style="left:598px;top:305.05px">  <i class="k">if</i> <i class="v">memes</i>:</span>
<span class="ln" style="top:328.05px">10</span><span class="code" style="left:598px;top:328.05px">    <i class="v">video</i> <i class="o">=</i> <b>make_video</b><i class="p1">(</i><i class="s">"./memes/"</i>,<i class="s">"music.mp3"</i>,</span>
<span class="ln" style="top:351.05px">11</span><span class="code" style="left:598px;top:351.05px">    <i class="k">if</i> <i class="v">video</i>:</span>
<span class="ln" style="top:374.05px">12</span><span class="code" style="left:598px;top:374.05px">     <b>print</b><i class="p1">(</i><i class="s">"video generated succesfull!"</i><i class="p1">)</i></span>
<span class="ln" style="top:397.05px">13</span>
<span class="ln" style="top:420.05px">14</span>
<span class="ln" style="top:443.05px">15</span><span class="code" style="left:598px;top:443.05px"><i class="k">if</i> <i class="v">__name__</i> <i class="o">==</i> <i class="s">"__main__"</i>:</span>
<span class="ln" style="top:466.05px">16</span><span class="code" style="left:598px;top:466.05px">  <b>main</b><i class="p1">()</i></span>
<div style="left:764px;top:258.25px;width:2.400px;height:23px;background:#e9ecf0"></div>
<svg style="left:763px;top:262px" width="10" height="23" viewBox="0 0 10 23" fill="none" stroke-linecap="round"><path d="M2 1.500c1.800 0 3 .6 3 2v16c0 1.400-1.200 2-3 2M8 1.500c-1.800 0-3 .6-3 2M8 21.500c-1.800 0-3-.6-3-2" stroke="#e4e8ec" stroke-width="2.600" opacity=".85"/><path d="M2 1.500c1.800 0 3 .6 3 2v16c0 1.400-1.200 2-3 2M8 1.500c-1.800 0-3 .6-3 2M8 21.500c-1.800 0-3-.6-3-2" stroke="#16181b" stroke-width="1.100"/></svg>
</div></div>
<svg style="left:1018px;top:119px" width="42" height="30" viewBox="0 0 42 30"><rect x="1.0" y="2.0" width="3.1" height="1.100" fill="#c678dd" opacity=".5"/><rect x="4.9" y="2.0" width="7.8" height="1.100" fill="#e5c07b" opacity=".5"/><rect x="13.5" y="2.0" width="4.7" height="1.100" fill="#c678dd" opacity=".5"/><rect x="18.9" y="2.0" width="7.8" height="1.100" fill="#61afef" opacity=".5"/><rect x="1.0" y="3.5" width="3.1" height="1.100" fill="#c678dd" opacity=".5"/><rect x="4.9" y="3.5" width="10.1" height="1.100" fill="#e5c07b" opacity=".5"/><rect x="15.8" y="3.5" width="4.7" height="1.100" fill="#c678dd" opacity=".5"/><rect x="21.3" y="3.5" width="10.9" height="1.100" fill="#61afef" opacity=".5"/><rect x="1.0" y="5.1" width="3.1" height="1.100" fill="#c678dd" opacity=".5"/><rect x="4.9" y="5.1" width="12.5" height="1.100" fill="#e5c07b" opacity=".5"/><rect x="18.2" y="5.1" width="4.7" height="1.100" fill="#c678dd" opacity=".5"/><rect x="23.6" y="5.1" width="9.4" height="1.100" fill="#7f848e" opacity=".5"/><rect x="1.0" y="8.2" width="2.3" height="1.100" fill="#c678dd" opacity=".5"/><rect x="4.1" y="8.2" width="3.1" height="1.100" fill="#61afef" opacity=".5"/><rect x="7.2" y="8.2" width="2.3" height="1.100" fill="#abb2bf" opacity=".5"/><rect x="2.6" y="9.8" width="7.0" height="1.100" fill="#e06c75" opacity=".5"/><rect x="10.4" y="9.8" width="0.8" height="1.100" fill="#56b6c2" opacity=".5"/><rect x="11.9" y="9.8" width="3.9" height="1.100" fill="#61afef" opacity=".5"/><rect x="16.6" y="9.8" width="25.4" height="1.100" fill="#98c379" opacity=".5"/><rect x="2.6" y="11.3" width="3.9" height="1.100" fill="#e06c75" opacity=".5"/><rect x="7.2" y="11.3" width="0.8" height="1.100" fill="#56b6c2" opacity=".5"/><rect x="8.8" y="11.3" width="2.3" height="1.100" fill="#e5c07b" opacity=".5"/><rect x="11.9" y="11.3" width="3.9" height="1.100" fill="#61afef" opacity=".5"/><rect x="16.6" y="11.3" width="25.4" height="1.100" fill="#98c379" opacity=".5"/><rect x="2.6" y="12.8" width="3.9" height="1.100" fill="#e06c75" opacity=".5"/><rect x="7.2" y="12.8" width="0.8" height="1.100" fill="#56b6c2" opacity=".5"/><rect x="8.8" y="12.8" width="10.9" height="1.100" fill="#61afef" opacity=".5"/><rect x="20.5" y="12.8" width="7.0" height="1.100" fill="#e06c75" opacity=".5"/><rect x="28.3" y="12.8" width="3.9" height="1.100" fill="#e06c75" opacity=".5"/><rect x="2.6" y="14.4" width="1.6" height="1.100" fill="#c678dd" opacity=".5"/><rect x="4.9" y="14.4" width="3.9" height="1.100" fill="#e06c75" opacity=".5"/><rect x="4.1" y="16.0" width="3.9" height="1.100" fill="#e06c75" opacity=".5"/><rect x="8.8" y="16.0" width="0.8" height="1.100" fill="#56b6c2" opacity=".5"/><rect x="10.4" y="16.0" width="7.8" height="1.100" fill="#61afef" opacity=".5"/><rect x="18.9" y="16.0" width="7.8" height="1.100" fill="#98c379" opacity=".5"/><rect x="27.5" y="16.0" width="8.6" height="1.100" fill="#98c379" opacity=".5"/><rect x="36.9" y="16.0" width="5.1" height="1.100" fill="#98c379" opacity=".5"/><rect x="4.1" y="17.5" width="1.6" height="1.100" fill="#c678dd" opacity=".5"/><rect x="6.5" y="17.5" width="3.9" height="1.100" fill="#e06c75" opacity=".5"/><rect x="4.9" y="19.1" width="3.9" height="1.100" fill="#61afef" opacity=".5"/><rect x="9.6" y="19.1" width="22.6" height="1.100" fill="#98c379" opacity=".5"/><rect x="1.0" y="23.7" width="1.6" height="1.100" fill="#c678dd" opacity=".5"/><rect x="3.3" y="23.7" width="6.2" height="1.100" fill="#e06c75" opacity=".5"/><rect x="10.4" y="23.7" width="1.6" height="1.100" fill="#56b6c2" opacity=".5"/><rect x="12.7" y="23.7" width="7.8" height="1.100" fill="#98c379" opacity=".5"/><rect x="2.6" y="25.2" width="3.1" height="1.100" fill="#61afef" opacity=".5"/><rect x="5.7" y="25.2" width="1.6" height="1.100" fill="#abb2bf" opacity=".5"/></svg>
<div style="left:1060px;top:120px;width:13px;height:298px;background:#2b3038"></div>
<div style="left:1060px;top:200.800px;width:13px;height:1.600px;background:#8b919c"></div>
<div style="left:598px;top:613px;width:224px;height:11px;background:#2b3038"></div>

<!-- status bar -->
<div style="left:255px;top:624px;width:818px;height:21px;background:#23282c"></div>

<svg style="left:268px;top:628px" width="14" height="14" viewBox="0 0 14 14" fill="none" stroke="#9da5b4" stroke-width="1.100"><circle cx="7" cy="7" r="5.500"/><path d="M4.800 4.800l4.400 4.400M9.200 4.800l-4.400 4.400"/></svg>
<span class="sb" style="left:285px">0</span>
<svg style="left:296px;top:628px" width="14" height="14" viewBox="0 0 14 14" fill="none" stroke="#9da5b4" stroke-width="1.100" stroke-linejoin="round"><path d="M7 1.800l5.700 10.400h-11.400z"/><path d="M7 5.500v3.500M7 10v1"/></svg>
<span class="sb" style="left:313px">13</span>
<svg style="left:340px;top:630px" width="10" height="10" viewBox="0 0 10 10"><path d="M5 .8a4.200 4.200 0 1 0 0 8.400a4.200 4.200 0 1 0 0-8.400zM3.800 3l3.200 2l-3.200 2z" fill="#9da5b4" fill-rule="evenodd"/></svg>
<span class="sb" style="left:351px">tabnine starter</span>
<svg style="left:433px;top:629px" width="14" height="11" viewBox="0 0 14 11"><path d="M13 3.500h-6.500l1-2l-1-.7l-3.500 2.700h-2.500v4.500h2.500c1 1 2 1.500 3.500 1.500h3c.8 0 1.200-.5 1-1.300c.6-.2.800-.8.500-1.400c.6-.3.700-1 .2-1.500h2c1.200 0 1.200-1.800-.2-1.800z" fill="#f0b429"/></svg>
<span class="sb" style="left:446px">:</span>
<span class="sb" style="left:465px;color:#f2f4f7">See Tabnine Insights</span>
<svg style="left:580px;top:628px" width="13" height="13" viewBox="0 0 13 13"><path d="M2 1.500l3-.8l1 3l-1.500.8l.5 2.500c1-1.500 3-2 4.800-1.200c2 .9 2.800 3 2.200 5c-3 1.500-7.500 1.800-11 .2c-.8-3.200-.5-6.500 1-9.500z" fill="#f0b429"/></svg>
<span class="sb" style="left:647px">Spaces: 2</span>
<span class="sb" style="left:716px">UTF-8</span>
<span class="sb" style="left:767px">LF</span>
<span class="sb" style="left:795px;letter-spacing:-.5px">{ }</span>
<div style="left:801px;top:636px;width:4.500px;height:4.500px;border-radius:3px;background:#9da5b4"></div>
<span class="sb" style="left:812px">Python</span>
<span class="sb" style="left:866px">3.7.3 64-bit</span>
<svg style="left:944px;top:628px" width="14" height="14" viewBox="0 0 14 14" fill="none" stroke="#9da5b4" stroke-width="1.100"><circle cx="7" cy="7" r="5.500"/><path d="M3.200 10.800l7.600-7.600"/></svg>
<span class="sb" style="left:961px">Prettier</span>
<svg style="left:1016px;top:628px" width="14" height="14" viewBox="0 0 14 14" fill="none" stroke="#9da5b4" stroke-width="1.100" stroke-linejoin="round"><path d="M5 2h8v5.500h-3l-1.500 1.500"/><circle cx="5" cy="7" r="2"/><path d="M1.500 13c0-2.200 1.500-3.700 3.500-3.700s3.500 1.500 3.500 3.700"/></svg>
<svg style="left:1045px;top:628px" width="14" height="14" viewBox="0 0 14 14" fill="none" stroke="#9da5b4" stroke-width="1.100" stroke-linejoin="round"><path d="M8 2.200c-3-.8-4.500 1.300-4.500 3.800v3l-1.300 1.800h9.600l-1.300-1.800v-2"/><path d="M5.800 11.500c.3 1.300 2.100 1.300 2.400 0"/><circle cx="10.500" cy="3.500" r="2" fill="#9da5b4" stroke="none"/></svg>


<!--VSC-END-->
</div></div>
<!--DOCK-->
<div style="left:154.500px;top:646.500px;width:971px;height:69px;background:linear-gradient(90deg,#5b5d63,#5e5f64 60%,#625f60);border-radius:13px;box-shadow:inset 0 0 0 .6px rgba(255,255,255,.22)"></div>
<svg style="left:163.9px;top:656px" width="46.5" height="46.5" viewBox="0 0 100 100"><defs><linearGradient id="fb" x1="0" y1="0" x2="0" y2="1"><stop offset="0" stop-color="#22b4f8"/><stop offset="1" stop-color="#1c62e0"/></linearGradient><linearGradient id="fw" x1="0" y1="0" x2="0" y2="1"><stop offset="0" stop-color="#f4f5f8"/><stop offset="1" stop-color="#cfd3dc"/></linearGradient><clipPath id="fc"><rect width="100" height="100" rx="22" ry="22"/></clipPath></defs>
<g clip-path="url(#fc)"><rect width="100" height="100" fill="url(#fw)"/><path d="M0 0h56c-8 16-12 36-12 56h12c-1 16 1 30 5 44h-61z" fill="url(#fb)"/></g>
<path d="M27 28v9M73 28v9" stroke="#1a2238" stroke-width="4" stroke-linecap="round"/><path d="M20 66c16 14 44 14 60 0" stroke="#1a2238" stroke-width="3.500" fill="none" stroke-linecap="round"/><path d="M56 0c-8 16-12 36-12 56h12c-1 16 1 30 5 44" stroke="#1a2238" stroke-width="1.500" fill="none" opacity=".5"/></svg>
<svg style="left:224.8px;top:656px" width="46.5" height="46.5" viewBox="0 0 100 100"><rect width="100" height="100" rx="22" ry="22" fill="#d5d6d9"/><rect x="16.0" y="16.0" width="19" height="19" rx="5" fill="#3ddc3a"/><rect x="40.5" y="16.0" width="19" height="19" rx="5" fill="#fbb712"/><rect x="65.0" y="16.0" width="19" height="19" rx="5" fill="#f5820c"/><rect x="16.0" y="40.5" width="19" height="19" rx="5" fill="#d8141c"/><rect x="40.5" y="40.5" width="19" height="19" rx="5" fill="#9aa0a2"/><rect x="65.0" y="40.5" width="19" height="19" rx="5" fill="#f0245f"/><rect x="16.0" y="65.0" width="19" height="19" rx="5" fill="#a234d8"/><rect x="40.5" y="65.0" width="19" height="19" rx="5" fill="#1d9cf2"/><rect x="65.0" y="65.0" width="19" height="19" rx="5" fill="#2fd68a"/></svg>
<svg style="left:285.7px;top:656px" width="46.5" height="46.5" viewBox="0 0 100 100"><rect width="100" height="100" rx="22" ry="22" fill="#fefefe"/><circle cx="19" cy="25" r="6.500" fill="none" stroke="#2378f0" stroke-width="2"/><circle cx="19" cy="25" r="4" fill="#2378f0"/><rect x="36" y="24" width="52" height="2" fill="#c9c9cc"/><circle cx="19" cy="50" r="6.500" fill="none" stroke="#e8283a" stroke-width="2"/><circle cx="19" cy="50" r="4" fill="#e8283a"/><rect x="36" y="49" width="52" height="2" fill="#c9c9cc"/><circle cx="19" cy="75" r="6.500" fill="none" stroke="#f09a1e" stroke-width="2"/><circle cx="19" cy="75" r="4" fill="#f09a1e"/><rect x="36" y="74" width="52" height="2" fill="#c9c9cc"/></svg>
<svg style="left:346.6px;top:656px" width="46.5" height="46.5" viewBox="0 0 100 100"><defs><clipPath id="nc"><rect width="100" height="100" rx="22" ry="22"/></clipPath><linearGradient id="ng" x1="0" y1="0" x2="0" y2="1"><stop offset="0" stop-color="#fbfaf6"/><stop offset="1" stop-color="#e8e6df"/></linearGradient></defs><g clip-path="url(#nc)"><rect width="100" height="100" fill="url(#ng)"/><rect width="100" height="27" fill="#fcd22f"/><rect y="48" width="100" height="1.500" fill="#d6d3cb"/><rect y="72" width="100" height="1.500" fill="#d6d3cb"/></g></svg>
<svg style="left:407.5px;top:656px" width="46.5" height="46.5" viewBox="0 0 100 100"><defs><linearGradient id="sg" x1="0" y1="0" x2="0" y2="1"><stop offset="0" stop-color="#c9cdd1"/><stop offset="1" stop-color="#7e8387"/></linearGradient></defs><rect width="100" height="100" rx="22" ry="22" fill="url(#sg)"/><circle cx="50" cy="50" r="42" fill="#55585b"/><circle cx="50" cy="50" r="39" fill="none" stroke="#3b3e41" stroke-width="5" stroke-dasharray="2.500 2"/><circle cx="50" cy="50" r="33" fill="#8f9396"/><circle cx="50" cy="50" r="26" fill="#5d6063"/><circle cx="50" cy="50" r="21" fill="none" stroke="#8f9396" stroke-width="4.500"/><path d="M50 50L76.8 65.5" stroke="#8f9396" stroke-width="5"/><path d="M50 50L23.2 65.5" stroke="#8f9396" stroke-width="5"/><path d="M50 50L50.0 19.0" stroke="#8f9396" stroke-width="5"/><circle cx="50" cy="50" r="4.500" fill="#8f9396"/></svg>
<svg style="left:468.4px;top:656px" width="46.5" height="46.5" viewBox="0 0 100 100"><defs><linearGradient id="wg" x1="0" y1="0" x2="0" y2="1"><stop offset="0" stop-color="#5cf777"/><stop offset="1" stop-color="#11c02f"/></linearGradient></defs><rect width="100" height="100" rx="22" ry="22" fill="url(#wg)"/><path d="M50 14a35 35 0 0 0-30 53l-5.500 19l19.500-5a35 35 0 1 0 16-67z" fill="none" stroke="#fff" stroke-width="6.500" stroke-linejoin="round"/><path d="M38 32c-2 0-6 3-6 9c0 7 5 14 11 20c7 6 15 9 19 9c4 0 8-3 9-6c.8-2 .5-4 0-4.500l-9-4.500c-1.200-.5-2 0-3 1l-3.500 4c-1 1-2 1-3 .5c-6-3-10-7-13-13c-.5-1 0-2 .8-3l2.700-3.500c.7-1 .7-2 .3-3l-3.800-9c-.5-1-1.500-1.500-2.500-1.500z" fill="#fff"/></svg>
<svg style="left:529.3px;top:656px" width="46.5" height="46.5" viewBox="0 0 100 100"><rect width="100" height="100" rx="22" ry="22" fill="#e6001c"/><g fill="none" stroke="#fff" stroke-width="8.500" stroke-linejoin="round" stroke-linecap="round"><path d="M16 30H57L36.500 74z"/><path d="M60 30H85L64.500 74L51 47"/></g></svg>
<svg style="left:590.2px;top:656px" width="46.5" height="46.5" viewBox="0 0 100 100"><defs><linearGradient id="sfg" x1="0" y1="0" x2="0" y2="1"><stop offset="0" stop-color="#25b2f5"/><stop offset="1" stop-color="#1b6fe8"/></linearGradient></defs><rect width="100" height="100" rx="22" ry="22" fill="#f3f3f5"/><circle cx="50" cy="50" r="41" fill="url(#sfg)"/><circle cx="50" cy="50" r="36" fill="none" stroke="#fff" stroke-width="4" stroke-dasharray=".8 3.900" opacity=".8"/><path d="M80 20l-25.500 35l-9-9z" fill="#f0353a"/><path d="M20 80l25.500-34l9 9z" fill="#f4f4f4"/></svg>
<svg style="left:651.1px;top:656px" width="46.5" height="46.5" viewBox="0 0 100 100"><rect width="100" height="100" rx="22" ry="22" fill="#f6f6f7"/><path d="M50 50L17.09 31.00A38 38 0 0 1 82.91 31.00z" fill="#e33b2e"/><path d="M50 50L82.91 31.00A38 38 0 0 1 50.00 88.00z" fill="#f9bc15"/><path d="M50 50L50.00 88.00A38 38 0 0 1 17.09 31.00z" fill="#2da94f"/><path d="M50 50L17.100 31L33.500 59.500z" fill="#e33b2e"/><path d="M50 50L82.900 31H50z" fill="#f9bc15"/><path d="M50 50L50 88L66.500 59.500z" fill="#2da94f"/><circle cx="50" cy="50" r="17.500" fill="#fff"/><circle cx="50" cy="50" r="14" fill="#3b7df0"/></svg>
<svg style="left:712.0px;top:656px" width="46.5" height="46.5" viewBox="0 0 100 100"><rect width="100" height="100" rx="22" ry="22" fill="#fdfdfe"/><path d="M67 78L21 37" stroke="#1173c5" stroke-width="11.500" stroke-linecap="round"/><path d="M67 22L21 63" stroke="#0f66b3" stroke-width="11.500" stroke-linecap="round"/><path d="M65 15.500l18 8v53l-18 8z" fill="#2a9cf0" stroke="#2a9cf0" stroke-width="2" stroke-linejoin="round"/></svg>
<svg style="left:770.3px;top:653.5px" width="51.5" height="50" viewBox="0 0 100 100"><path d="M4 5h58c22 0 36 14 36 34v26c0 20-14 33-36 33h-24c-22 0-36-13-36-33v-58z" fill="#323d55" transform="translate(2.500 2.500)"/><path d="M2 2h60c22 0 36 14 36 34v26c0 20-14 33-36 33h-24c-22 0-36-13-36-33z" fill="#eef1fb"/><path d="M2 2l34 30l-34 22z" fill="#b9c4e8" opacity=".75"/><rect x="41" y="10" width="18" height="20" rx="4" fill="#c9cad1" stroke="#a6a7b0" stroke-width="1.500" transform="rotate(10 50 52)"/><rect x="41" y="10" width="18" height="20" rx="4" fill="#c9cad1" stroke="#a6a7b0" stroke-width="1.500" transform="rotate(55 50 52)"/><rect x="41" y="10" width="18" height="20" rx="4" fill="#c9cad1" stroke="#a6a7b0" stroke-width="1.500" transform="rotate(100 50 52)"/><rect x="41" y="10" width="18" height="20" rx="4" fill="#c9cad1" stroke="#a6a7b0" stroke-width="1.500" transform="rotate(145 50 52)"/><rect x="41" y="10" width="18" height="20" rx="4" fill="#c9cad1" stroke="#a6a7b0" stroke-width="1.500" transform="rotate(190 50 52)"/><rect x="41" y="10" width="18" height="20" rx="4" fill="#c9cad1" stroke="#a6a7b0" stroke-width="1.500" transform="rotate(235 50 52)"/><rect x="41" y="10" width="18" height="20" rx="4" fill="#c9cad1" stroke="#a6a7b0" stroke-width="1.500" transform="rotate(280 50 52)"/><rect x="41" y="10" width="18" height="20" rx="4" fill="#c9cad1" stroke="#a6a7b0" stroke-width="1.500" transform="rotate(325 50 52)"/><circle cx="50" cy="52" r="30" fill="#d9dae0"/><circle cx="50" cy="50" r="27" fill="#e6e7ec"/><ellipse cx="50" cy="46" rx="16" ry="12" fill="#7f8fc0"/><ellipse cx="50" cy="48" rx="14" ry="9.500" fill="#b4c6ef"/></svg>
<div style="left:839.500px;top:655px;width:1px;height:51px;background:#3e4046"></div>
<svg style="left:860.7px;top:656px" width="45.5" height="46.5" viewBox="0 0 100 100"><rect x="2" y="2" width="96" height="96" rx="21" fill="#1b1b1d" stroke="#b9babd" stroke-width="3.500"/><rect x="8" y="8" width="84" height="84" rx="16" fill="#232325"/></svg>
<span style="left:867.500px;top:661px;font-family:'DejaVu Sans Mono','Liberation Mono',monospace;font-weight:bold;font-size:10.5px;line-height:12px;color:#f2f2f2;letter-spacing:-.5px">&gt;_</span>
<svg style="left:920.5px;top:656px" width="46.5" height="46.5" viewBox="0 0 100 100"><defs><radialGradient id="qg" cx=".5" cy=".45" r=".5"><stop offset="0" stop-color="#8ff0ff"/><stop offset=".55" stop-color="#2fb4f4"/><stop offset="1" stop-color="#1a6fd8"/></radialGradient><linearGradient id="qs" x1="0" y1="0" x2="1" y2="1"><stop offset="0" stop-color="#eef1f4"/><stop offset="1" stop-color="#9fa5ad"/></linearGradient></defs><rect width="100" height="100" rx="22" ry="22" fill="#1a1b1d"/><circle cx="49" cy="50" r="41" fill="url(#qs)"/><circle cx="49" cy="50" r="26" fill="url(#qg)"/><path d="M52 58l13-8l24 34l-13 8z" fill="#c3c8ce"/></svg>
<svg style="left:981px;top:656px" width="46.5" height="46.5" viewBox="0 0 100 100"><rect width="100" height="100" rx="22" ry="22" fill="#fdfdfe"/><path d="M67 78L21 37" stroke="#1173c5" stroke-width="11.500" stroke-linecap="round"/><path d="M67 22L21 63" stroke="#0f66b3" stroke-width="11.500" stroke-linecap="round"/><path d="M65 15.500l18 8v53l-18 8z" fill="#2a9cf0" stroke="#2a9cf0" stroke-width="2" stroke-linejoin="round"/></svg>
<div style="left:1049px;top:655px;width:1px;height:51px;background:#3e4046"></div>
<svg style="left:1070px;top:650px" width="45" height="56" viewBox="0 0 45 56"><defs><linearGradient id="tg" x1="0" y1="0" x2="1" y2="0"><stop offset="0" stop-color="#c9cbcf"/><stop offset=".5" stop-color="#eeeff1"/><stop offset="1" stop-color="#bfc1c6"/></linearGradient></defs><path d="M2 7h41l-4.500 44c-.3 2.500-2 4-4.500 4h-23c-2.500 0-4.200-1.500-4.500-4z" fill="url(#tg)" opacity=".93"/><ellipse cx="22.500" cy="7" rx="20.500" ry="4" fill="#9da0a6"/><path d="M7 6l5-4l6 3l5-4l6 4l5-3l5 4l-3 3h-26z" fill="#d8d9dc"/><path d="M12 4l4 2l-3 2zM24 2l4 3l-5 2z" fill="#3a8a78"/><path d="M17 3l5 3h-6zM30 3l3 3l-5 1z" fill="#2b2b33"/></svg>
<div style="left:185.9px;top:711.200px;width:2.800px;height:2.800px;border-radius:1.400px;background:#08090a"></div><div style="left:611.1px;top:711.200px;width:2.800px;height:2.800px;border-radius:1.400px;background:#08090a"></div><div style="left:671.6px;top:711.200px;width:2.800px;height:2.800px;border-radius:1.400px;background:#08090a"></div><div style="left:733.1px;top:711.200px;width:2.800px;height:2.800px;border-radius:1.400px;background:#08090a"></div><div style="left:881.6px;top:711.200px;width:2.800px;height:2.800px;border-radius:1.400px;background:#08090a"></div><div style="left:942.3000000000001px;top:711.200px;width:2.800px;height:2.800px;border-radius:1.400px;background:#08090a"></div>
<!--DOCK-END-->
<div class="bar" style="left:0"></div><div class="bar" style="left:1216px"></div>
</div>
</body></html>
